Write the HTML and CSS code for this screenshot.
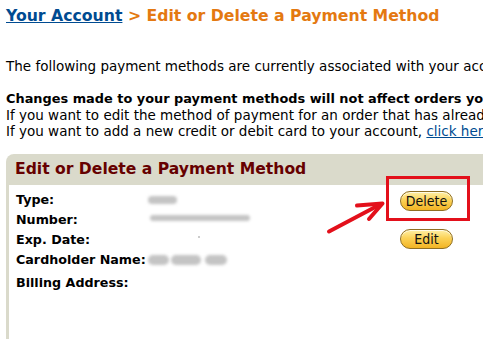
FILE: index.html
```html
<!DOCTYPE html>
<html lang="en">
<head>
<meta charset="utf-8">
<title>Edit or Delete a Payment Method</title>
<link rel="stylesheet" href="styles.css">
</head>
<body>
<div class="page">
  <h1 class="crumb"><a href="#" class="crumb-link">Your Account</a> <span class="crumb-current">&gt; Edit or Delete a Payment Method</span></h1>

  <p class="intro">The following payment methods are currently associated with your account:</p>

  <p class="notes"><b>Changes made to your payment methods will not affect orders you have already placed.</b><br>If you want to edit the method of payment for an order that has already been placed, visit Your Orders.<br>If you want to add a new credit or debit card to your account, <a href="#" class="text-link">click here</a>.</p>

  <section class="panel">
    <h2 class="panel-head">Edit or Delete a Payment Method</h2>
    <div class="panel-body">
      <div class="details">
        <div class="label">Type:</div>
        <div class="value"><span class="blob blob-type"></span></div>
        <div class="label">Number:</div>
        <div class="value"><span class="blob blob-number"></span></div>
        <div class="label">Exp. Date:</div>
        <div class="value"><span class="blob blob-dot"></span></div>
        <div class="label">Cardholder Name:</div>
        <div class="value"><span class="blob blob-n1"></span><span class="blob blob-n2"></span><span class="blob blob-n3"></span></div>
        <div class="label label-billing">Billing Address:</div>
        <div class="value label-billing"></div>
      </div>
      <div class="actions">
        <button class="pill pill-delete" type="button">Delete</button>
        <button class="pill pill-edit" type="button">Edit</button>
      </div>
    </div>
  </section>
</div>

<svg class="annotation" width="483" height="339" viewBox="0 0 483 339" aria-hidden="true">
  <rect x="387.5" y="177.5" width="81" height="42" fill="none" stroke="#e3101b" stroke-width="3"/>
  <path d="M329 231.5 L381 204" fill="none" stroke="#e3101b" stroke-width="4" stroke-linecap="round"/>
  <path d="M357 205.5 L382.5 203.5 L369 219" fill="none" stroke="#e3101b" stroke-width="4" stroke-linecap="round" stroke-linejoin="round"/>
</svg>
</body>
</html>
```

FILE: styles.css
```css
html, body {
  margin: 0;
  padding: 0;
  overflow: hidden;
  background: #ffffff;
}

body {
  font-family: "DejaVu Sans", Verdana, sans-serif;
  color: #000;
  position: relative;
  width: 483px;
  height: 339px;
}

.page {
  width: 760px;
  padding-left: 6px;
}

.crumb {
  margin: 0;
  padding-top: 4px;
  font-size: 15.7px;
  line-height: 24px;
  font-weight: bold;
  white-space: nowrap;
}

.crumb-link {
  color: #004b91;
  text-decoration: underline;
}

.crumb-current {
  color: #e47911;
}

.intro {
  margin: 30px 0 0;
  font-size: 13.5px;
  line-height: 16px;
  white-space: nowrap;
}

.notes {
  margin: 16px 0 0;
  font-size: 13.5px;
  line-height: 16px;
  white-space: nowrap;
}

.notes b {
  font-size: 12.9px;
}

.text-link {
  color: #004b91;
}

.panel {
  margin-top: 15px;
  width: 520px;
}

.panel-head {
  margin: 0;
  background: #dadacb;
  border-radius: 8px 8px 0 0;
  color: #660000;
  font-size: 15.6px;
  line-height: 31px;
  padding-left: 9px;
  font-weight: bold;
  white-space: nowrap;
}

.panel-body {
  display: flex;
  border-left: 3px solid #dadacb;
  background: #ffffff;
  min-height: 170px;
  padding-top: 5px;
}

.details {
  flex: 0 0 384px;
  display: grid;
  grid-template-columns: 132px 1fr;
  grid-auto-rows: 20px;
  padding-left: 7px;
  font-size: 12.7px;
  line-height: 20px;
}

.label {
  font-weight: bold;
  white-space: nowrap;
}

.label-billing {
  margin-top: 3px;
}

.value {
  display: flex;
  align-items: center;
  gap: 2px;
}

.blob {
  display: inline-block;
  background: #c4c4c4;
  border-radius: 6px;
  filter: blur(1.5px);
}

.blob-type {
  width: 29px;
  height: 8px;
  margin-top: -1px;
}

.blob-number {
  width: 100px;
  height: 6px;
  margin-left: 2px;
  margin-top: -4px;
}

.blob-dot {
  width: 2px;
  height: 2px;
  margin-left: 50px;
  margin-top: -6px;
  background: #bbb;
  filter: blur(0.6px);
}

.blob-n1 {
  width: 21px;
  height: 10px;
}

.blob-n2 {
  width: 30px;
  height: 10px;
}

.blob-n3 {
  width: 22px;
  height: 10px;
  margin-left: 2px;
}

.actions {
  display: flex;
  flex-direction: column;
  align-items: flex-start;
  gap: 18px;
  padding-top: 1px;
}

.pill {
  width: 53px;
  height: 20px;
  padding: 0;
  border: 1px solid #8f6f22;
  border-radius: 10px;
  background: linear-gradient(#fff0a8 0%, #fbd257 45%, #f2b424 100%);
  box-shadow: inset 0 1px 0 rgba(255,255,255,0.7);
  font-family: "Liberation Sans Narrow", "DejaVu Sans Condensed", "Liberation Sans", sans-serif;
  font-size: 14px;
  line-height: 18px;
  color: #111;
  text-align: center;
  cursor: pointer;
}

.annotation {
  position: absolute;
  left: 0;
  top: 0;
  pointer-events: none;
}
```
